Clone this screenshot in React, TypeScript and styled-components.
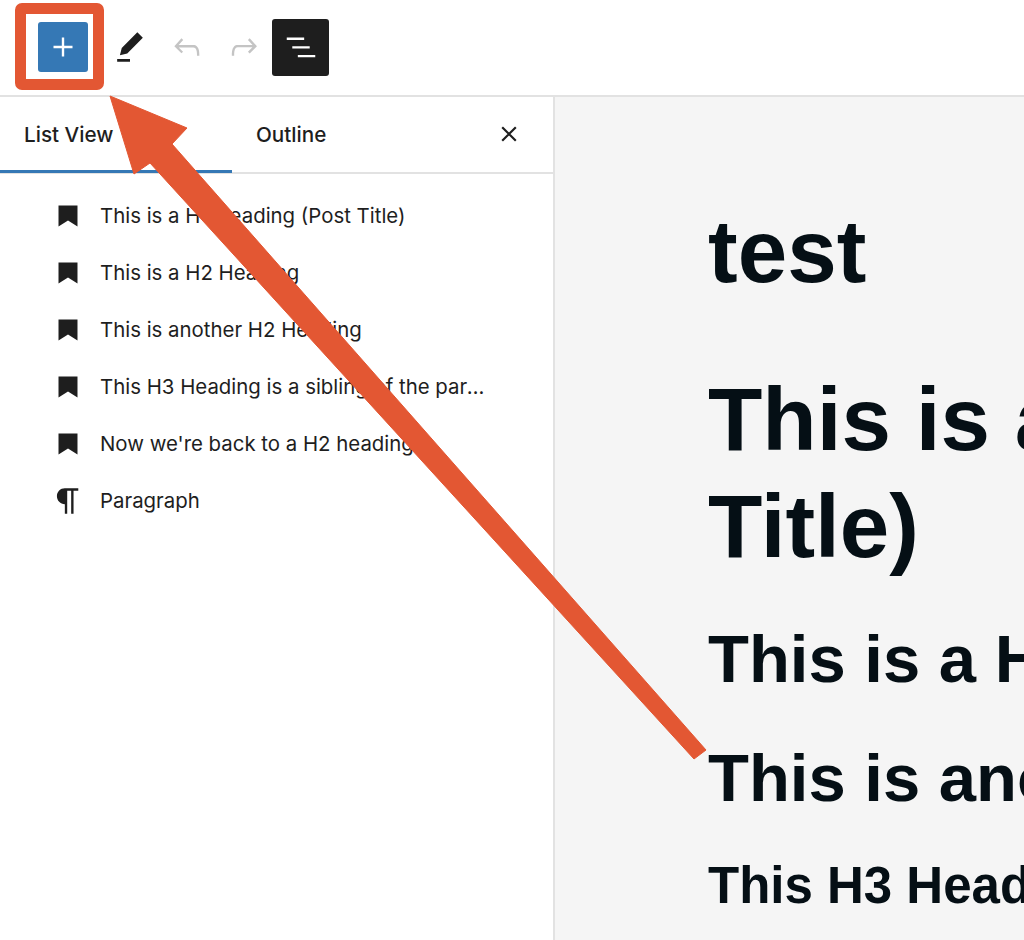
import React from "react";
import styled, { createGlobalStyle } from "styled-components";

const Global = createGlobalStyle`
  html, body { margin: 0; padding: 0; background: #fff; }
  body { font-family: Inter, "Liberation Sans", sans-serif; color: #1e1e1e; }
`;

const Page = styled.div`
  position: relative;
  width: 1024px;
  height: 940px;
  overflow: hidden;
  display: flex;
  flex-direction: column;
`;

const Toolbar = styled.header`
  height: 94px;
  flex: none;
  display: flex;
  align-items: center;
  padding: 0 0 1px 38px;
  border-bottom: 2px solid #e2e2e2;
  background: #fff;
`;

const InserterButton = styled.button`
  width: 50px;
  height: 50px;
  margin-right: 13px;
  padding: 0;
  border: 0;
  border-radius: 3px;
  background: #3578b5;
  color: #fff;
  display: flex;
  align-items: center;
  justify-content: center;
`;

const ToolButton = styled.button<{ $active?: boolean; $muted?: boolean }>`
  width: 57px;
  height: 57px;
  padding: 0;
  border: 0;
  border-radius: 3px;
  background: ${(p) => (p.$active ? "#1e1e1e" : "transparent")};
  color: ${(p) => (p.$active ? "#fff" : p.$muted ? "#c4c4c4" : "#1e1e1e")};
  display: flex;
  align-items: center;
  justify-content: center;
`;

const Body = styled.div`
  flex: 1;
  min-height: 0;
  display: flex;
`;

const Sidebar = styled.aside`
  width: 553px;
  flex: none;
  border-right: 2px solid #e2e2e2;
  background: #fff;
  display: flex;
  flex-direction: column;
`;

const Tabs = styled.div`
  height: 75px;
  flex: none;
  display: flex;
  align-items: stretch;
  border-bottom: 2px solid #e2e2e2;
  padding-right: 32px;
`;

const Tab = styled.div<{ $selected?: boolean }>`
  width: 232px;
  box-sizing: border-box;
  padding: 2px 0 0 24px;
  display: flex;
  align-items: center;
  font-size: 20.7px;
  font-weight: 500;
  color: #1e1e1e;
  margin-bottom: -1px;
  border-bottom: 3px solid ${(p) => (p.$selected ? "#3578b5" : "transparent")};
`;

const CloseButton = styled.button`
  margin-left: auto;
  width: 24px;
  padding: 0 0 1px;
  border: 0;
  background: none;
  color: #1e1e1e;
  display: flex;
  align-items: center;
  justify-content: center;
`;

const List = styled.ul`
  list-style: none;
  margin: 0;
  padding: 13px 0 0 0;
`;

const Row = styled.li`
  height: 57px;
  display: flex;
  align-items: center;
  font-size: 20.4px;
  color: #1e1e1e;
`;

const RowIcon = styled.span`
  width: 100px;
  flex: none;
  display: flex;
  justify-content: center;
  padding-left: 35px;
  box-sizing: border-box;
`;

const RowLabel = styled.span`
  width: 392px;
  white-space: nowrap;
  overflow: hidden;
  text-overflow: ellipsis;
`;

const Canvas = styled.main`
  flex: 1;
  min-width: 0;
  overflow: hidden;
  background: #f5f5f5;
  padding: 104px 0 0 153px;
`;

const Heading = styled.div<{ $size: number; $leading: number; $gap: number }>`
  font-family: "Liberation Sans", Arial, sans-serif;
  font-weight: 700;
  color: #050f15;
  white-space: nowrap;
  font-size: ${(p) => p.$size}px;
  line-height: ${(p) => p.$leading}px;
  margin-top: ${(p) => p.$gap}px;
`;

const Highlight = styled.div`
  position: absolute;
  left: 15px;
  top: 3px;
  width: 89px;
  height: 87px;
  box-sizing: border-box;
  border: 11px solid #e35733;
  border-radius: 7px;
  pointer-events: none;
`;

const ArrowLayer = styled.svg`
  position: absolute;
  inset: 0;
  pointer-events: none;
`;

const Icon = ({ size, d }: { size: number; d: string }) => (
  <svg width={size} height={size} viewBox="0 0 24 24" fill="currentColor" aria-hidden="true">
    <path d={d} />
  </svg>
);

const CloseIcon = () => (
  <svg width={24} height={24} viewBox="0 0 24 24" fill="none" stroke="currentColor" strokeWidth={2.2} aria-hidden="true">
    <path d="M5.2 5.2l13.6 13.6M18.8 5.2L5.2 18.8" />
  </svg>
);

const paths = {
  plus: "M11.25 12.75V18h1.5v-5.25H18v-1.5h-5.25V6h-1.5v5.25H6v1.5h5.25Z",
  pencil: "m19 7-3-3-8.5 8.5-1 4 4-1L19 7Zm-7 11.5H5V20h7v-1.5Z",
  undo: "M18.3 11.7c-.6-.6-1.4-.9-2.3-.9H6.7l2.9-3.3-1.1-1-4.5 5L8.5 16l1-1-2.7-2.7H16c.5 0 .9.2 1.3.5 1 1 1 3.4 1 4.5v.3h1.5v-.2c0-1.5 0-4.3-1.5-5.7z",
  redo: "M15.6 6.5l-1.1 1 2.9 3.3H8c-.9 0-1.7.3-2.3.9-1.4 1.5-1.4 4.2-1.4 5.6v.2h1.5v-.3c0-1.1 0-3.5 1-4.5.3-.3.7-.5 1.3-.5h9.2L14.5 15l1.1 1.1 4.6-4.6-4.6-5z",
  listView: "M3 6h11v1.5H3V6Zm3.5 5.5h11V13h-11v-1.5ZM21 17H10v1.5h11V17Z",
  bookmark: "M5.3 4.6h13.4v14.8L12 15.2l-6.7 4.2z",
  paragraph:
    "m9.99609 14v-.2251l.00391.0001v6.225h1.5v-14.5h2.5v14.5h1.5v-14.5h3v-1.5h-8.50391c-2.76142 0-5 2.23858-5 5 0 2.7614 2.23858 5 5 5z",
};

const rows = [
  "This is a H1 Heading (Post Title)",
  "This is a H2 Heading",
  "This is another H2 Heading",
  "This H3 Heading is a sibling of the parent heading",
  "Now we're back to a H2 heading",
];

export default function App() {
  return (
    <Page>
      <Global />
      <Toolbar>
        <InserterButton aria-label="Add block">
          <Icon size={38} d={paths.plus} />
        </InserterButton>
        <ToolButton aria-label="Tools">
          <Icon size={44} d={paths.pencil} />
        </ToolButton>
        <ToolButton $muted aria-label="Undo">
          <Icon size={38} d={paths.undo} />
        </ToolButton>
        <ToolButton $muted aria-label="Redo">
          <Icon size={38} d={paths.redo} />
        </ToolButton>
        <ToolButton $active aria-label="Document overview">
          <Icon size={38} d={paths.listView} />
        </ToolButton>
      </Toolbar>
      <Body>
        <Sidebar>
          <Tabs>
            <Tab $selected>List View</Tab>
            <Tab>Outline</Tab>
            <CloseButton aria-label="Close">
              <CloseIcon />
            </CloseButton>
          </Tabs>
          <List>
            {rows.map((r) => (
              <Row key={r}>
                <RowIcon>
                  <Icon size={34} d={paths.bookmark} />
                </RowIcon>
                <RowLabel>{r}</RowLabel>
              </Row>
            ))}
            <Row>
              <RowIcon>
                <Icon size={38} d={paths.paragraph} />
              </RowIcon>
              <RowLabel>Paragraph</RowLabel>
            </Row>
          </List>
        </Sidebar>
        <Canvas>
          <Heading $size={89} $leading={100} $gap={0}>test</Heading>
          <Heading $size={89} $leading={107} $gap={65}>
            This is a H1 Heading (Post
            <br />
            Title)
          </Heading>
          <Heading $size={67} $leading={90} $gap={34}>This is a H2 Heading</Heading>
          <Heading $size={67} $leading={90} $gap={29}>This is another H2 Heading</Heading>
          <Heading $size={51} $leading={70} $gap={28}>This H3 Heading is a sibling</Heading>
        </Canvas>
      </Body>
      <Highlight />
      <ArrowLayer width={1024} height={940} viewBox="0 0 1024 940">
        <polygon
          points="110,96 187,128 172,144 706,750 694,759 150,163 134,174"
          fill="#e35733"
          stroke="#e35733"
          strokeWidth={1}
          strokeLinejoin="round"
        />
      </ArrowLayer>
    </Page>
  );
}
